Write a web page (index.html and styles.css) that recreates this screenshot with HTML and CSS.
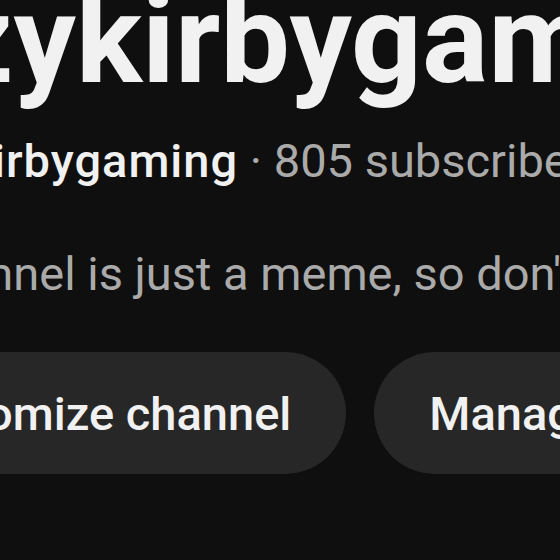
FILE: index.html
```html
<!DOCTYPE html>
<html>
<head>
<meta charset="utf-8">
<link rel="stylesheet" href="styles.css">
</head>
<body>
<div class="channel">
  <h1 class="title">crazykirbygaming</h1>
  <div class="meta"><span class="handle">@crazykirbygaming</span><span class="sep"> · </span><span>805 subscribers</span><span class="sep"> · </span><span>12 videos</span></div>
  <div class="desc">This channel is just a meme, so don't take it seriously</div>
  <div class="actions">
    <button class="btn">Customize channel</button>
    <button class="btn">Manage videos</button>
  </div>
</div>
</body>
</html>
```
FILE: styles.css
```css
html, body {
  margin: 0;
  padding: 0;
  background: #0f0f0f;
  overflow: hidden;
  width: 560px;
  height: 560px;
}
.channel {
  margin: -22px 0 0 -190px;
  font-family: Roboto, "Noto Sans", sans-serif;
  white-space: nowrap;
  width: 2000px;
}
.title {
  margin: 0 0 0 -34px;
  font-size: 124px;
  line-height: 1;
  font-weight: 700;
  color: #f1f1f1;
}
.meta {
  margin: 24px 0 0 -3px;
  font-size: 47px;
  line-height: 69px;
  color: #aaaaaa;
}
.handle {
  color: #f1f1f1;
  font-weight: 500;
  letter-spacing: 1px;
}
.desc {
  margin-top: 44px;
  font-size: 47px;
  line-height: 69px;
  color: #aaaaaa;
}
.actions {
  margin: 44px 0 0 25px;
  display: flex;
  gap: 28px;
}
.btn {
  height: 122px;
  padding: 0 55px;
  border: none;
  border-radius: 61px;
  background: #272727;
  color: #f1f1f1;
  font-family: Roboto, "Noto Sans", sans-serif;
  font-size: 47px;
  font-weight: 500;
}
```
